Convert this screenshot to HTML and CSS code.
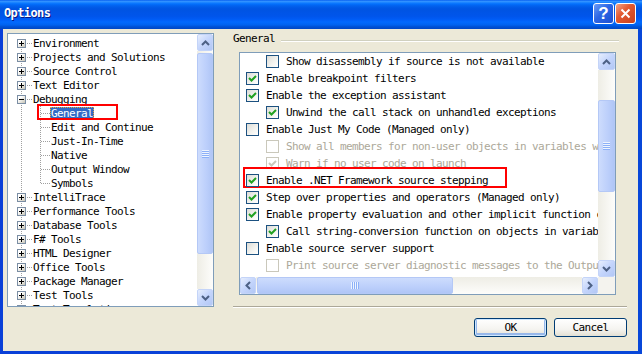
FILE: index.html
```html
<!DOCTYPE html>
<html lang="en">

<head>
    <meta charset="UTF-8">
    <meta name="viewport" content="width=device-width, initial-scale=1.0">
    <title>Options</title>
    <link rel="stylesheet" href="styles.css">
</head>

<body>
    <div class="window">
        <!-- Title bar -->
        <div class="titlebar">
            <span class="title">Options</span>
            <button class="caption-btn help-btn">?</button>
            <button class="caption-btn close-btn">
                <svg width="11" height="11" viewBox="0 0 11 11"><path d="M1.5 1.5 L9.5 9.5 M9.5 1.5 L1.5 9.5" stroke="#fff" stroke-width="2" fill="none"/></svg>
            </button>
        </div>

        <div class="client">
            <!-- Category tree -->
            <div class="tree-box">
                <div class="tree">
                    <div class="node"><span class="expander plus"></span><span class="hline"></span><span class="label">Environment</span></div>
                    <div class="node"><span class="expander plus"></span><span class="hline"></span><span class="label">Projects and Solutions</span></div>
                    <div class="node"><span class="expander plus"></span><span class="hline"></span><span class="label">Source Control</span></div>
                    <div class="node"><span class="expander plus"></span><span class="hline"></span><span class="label">Text Editor</span></div>
                    <div class="node"><span class="expander minus"></span><span class="hline"></span><span class="label">Debugging</span></div>
                    <div class="children">
                        <div class="child marked"><span class="child-line"></span><span class="label selected">General</span></div>
                        <div class="child"><span class="child-line"></span><span class="label">Edit and Continue</span></div>
                        <div class="child"><span class="child-line"></span><span class="label">Just-In-Time</span></div>
                        <div class="child"><span class="child-line"></span><span class="label">Native</span></div>
                        <div class="child"><span class="child-line"></span><span class="label">Output Window</span></div>
                        <div class="child"><span class="child-line"></span><span class="label">Symbols</span></div>
                    </div>
                    <div class="node"><span class="expander plus"></span><span class="hline"></span><span class="label">IntelliTrace</span></div>
                    <div class="node"><span class="expander plus"></span><span class="hline"></span><span class="label">Performance Tools</span></div>
                    <div class="node"><span class="expander plus"></span><span class="hline"></span><span class="label">Database Tools</span></div>
                    <div class="node"><span class="expander plus"></span><span class="hline"></span><span class="label">F# Tools</span></div>
                    <div class="node"><span class="expander plus"></span><span class="hline"></span><span class="label">HTML Designer</span></div>
                    <div class="node"><span class="expander plus"></span><span class="hline"></span><span class="label">Office Tools</span></div>
                    <div class="node"><span class="expander plus"></span><span class="hline"></span><span class="label">Package Manager</span></div>
                    <div class="node"><span class="expander plus"></span><span class="hline"></span><span class="label">Test Tools</span></div>
                    <div class="node"><span class="expander plus"></span><span class="hline"></span><span class="label">Text Templating</span></div>
                </div>
                <div class="vscroll tree-scroll">
                    <div class="sb-btn"><svg width="9" height="6" viewBox="0 0 9 6"><path d="M1 5 L4.5 1.5 L8 5" stroke="#4d6185" stroke-width="2" fill="none"/></svg></div>
                    <div class="v-track"><div class="v-thumb"><span class="grip-v"></span></div></div>
                    <div class="sb-btn"><svg width="9" height="6" viewBox="0 0 9 6"><path d="M1 1 L4.5 4.5 L8 1" stroke="#4d6185" stroke-width="2" fill="none"/></svg></div>
                </div>
            </div>

            <!-- Settings page -->
            <div class="settings">
                <div class="group-head">
                    <span class="group-title">General</span>
                    <span class="group-line"></span>
                </div>

                <div class="list-box">
                    <div class="list">
                        <div class="row sub"><span class="check"></span><span class="text">Show disassembly if source is not available</span></div>
                        <div class="row"><span class="check on"></span><span class="text">Enable breakpoint filters</span></div>
                        <div class="row"><span class="check on"></span><span class="text">Enable the exception assistant</span></div>
                        <div class="row sub"><span class="check on"></span><span class="text">Unwind the call stack on unhandled exceptions</span></div>
                        <div class="row"><span class="check"></span><span class="text">Enable Just My Code (Managed only)</span></div>
                        <div class="row sub disabled"><span class="check"></span><span class="text">Show all members for non-user objects in variables windows</span></div>
                        <div class="row sub disabled"><span class="check on"></span><span class="text">Warn if no user code on launch</span></div>
                        <div class="row marked"><span class="check on"></span><span class="text">Enable .NET Framework source stepping</span></div>
                        <div class="row"><span class="check on"></span><span class="text">Step over properties and operators (Managed only)</span></div>
                        <div class="row"><span class="check on"></span><span class="text">Enable property evaluation and other implicit function calls</span></div>
                        <div class="row sub"><span class="check on"></span><span class="text">Call string-conversion function on objects in variables windows</span></div>
                        <div class="row"><span class="check"></span><span class="text">Enable source server support</span></div>
                        <div class="row sub disabled"><span class="check"></span><span class="text">Print source server diagnostic messages to the Output window</span></div>
                    </div>
                    <div class="vscroll list-vscroll">
                        <div class="sb-btn"><svg width="9" height="6" viewBox="0 0 9 6"><path d="M1 5 L4.5 1.5 L8 5" stroke="#4d6185" stroke-width="2" fill="none"/></svg></div>
                        <div class="v-track"><div class="v-thumb"><span class="grip-v"></span></div></div>
                        <div class="sb-btn"><svg width="9" height="6" viewBox="0 0 9 6"><path d="M1 1 L4.5 4.5 L8 1" stroke="#4d6185" stroke-width="2" fill="none"/></svg></div>
                    </div>
                    <div class="hscroll">
                        <div class="sb-btn"><svg width="6" height="9" viewBox="0 0 6 9"><path d="M5 1 L1.5 4.5 L5 8" stroke="#4d6185" stroke-width="2" fill="none"/></svg></div>
                        <div class="h-track"><div class="h-thumb"><span class="grip-h"></span></div></div>
                        <div class="sb-btn"><svg width="6" height="9" viewBox="0 0 6 9"><path d="M1 1 L4.5 4.5 L1 8" stroke="#4d6185" stroke-width="2" fill="none"/></svg></div>
                    </div>
                    <div class="corner"></div>
                </div>

                <div class="separator"></div>

                <div class="buttons">
                    <button class="btn default">OK</button>
                    <button class="btn">Cancel</button>
                </div>
            </div>
        </div>
    </div>
</body>

</html>
```

FILE: styles.css
```css
/* Base */
body {
    margin: 0;
    padding: 0;
    font-family: 'DejaVu Sans Mono', 'Liberation Mono', monospace;
    font-size: 11px;
    letter-spacing: -0.62px;
    color: #000;
}

/* Window frame */
.window {
    width: 642px;
    height: 354px;
    display: flex;
    flex-direction: column;
    background: linear-gradient(to right, #0a40d8, #0847d9);
    overflow: hidden;
}

.titlebar {
    height: 29px;
    flex: none;
    display: flex;
    align-items: flex-start;
    padding: 3px 6px 0 4px;
    box-sizing: border-box;
    background: linear-gradient(to bottom, #0058ee 0%, #3593ff 4%, #288eff 7%, #127dff 10%, #036ffc 14%, #0262ee 20%, #0057e5 28%, #0054e3 34%, #0055eb 56%, #005bf5 66%, #026afe 76%, #0062ef 86%, #0052d6 92%, #0047c4 100%);
}

.title {
    flex: 1;
    color: #fff;
    font-weight: bold;
    font-size: 12px;
    letter-spacing: -0.6px;
    line-height: 21px;
    text-shadow: 1px 1px 0 #0a1883;
}

.caption-btn {
    width: 21px;
    height: 21px;
    margin-left: 1px;
    padding: 0;
    border: 1px solid #fff;
    border-radius: 3px;
    display: flex;
    align-items: center;
    justify-content: center;
    color: #fff;
}

.help-btn {
    background: linear-gradient(135deg, #6a9cf7 0%, #2d66e4 45%, #1c4fd2 100%);
    font-family: 'Liberation Sans', Arial, sans-serif;
    font-weight: bold;
    font-size: 17px;
    letter-spacing: 0;
}

.close-btn {
    background: linear-gradient(135deg, #f1a58a 0%, #e35a32 40%, #c9401c 100%);
}

/* Dialog body */
.client {
    flex: 1;
    display: flex;
    gap: 19px;
    margin: 0 4px 3px 3px;
    padding: 4px 11px 0 4px;
    background-color: #ece9d8;
}

/* Tree */
.tree-box {
    width: 207px;
    height: 274px;
    box-sizing: border-box;
    border: 1px solid #7f9db9;
    background: #fff;
    display: flex;
}

.tree {
    flex: 1;
    overflow: hidden;
    padding-top: 2px;
    background: repeating-linear-gradient(to bottom, #a0a0a0 0 1px, transparent 1px 2px) 13px 9px / 1px 100% no-repeat;
}

.node,
.child {
    height: 14px;
    display: flex;
    align-items: center;
    white-space: nowrap;
}

.node {
    padding-left: 9px;
}

.expander {
    width: 9px;
    height: 9px;
    flex: none;
    box-sizing: border-box;
    border: 1px solid #7b8ea4;
}

.plus {
    background: linear-gradient(#000, #000) center / 5px 1px no-repeat,
        linear-gradient(#000, #000) center / 1px 5px no-repeat,
        linear-gradient(135deg, #fff 30%, #c6c3b4);
}

.minus {
    background: linear-gradient(#000, #000) center / 5px 1px no-repeat,
        linear-gradient(135deg, #fff 30%, #c6c3b4);
}

.hline {
    width: 6px;
    height: 1px;
    flex: none;
    background: repeating-linear-gradient(to right, transparent 0 1px, #a0a0a0 1px 2px);
}

.label {
    padding: 0 1px;
    line-height: 13px;
}

.children {
    background: repeating-linear-gradient(to bottom, #a0a0a0 0 1px, transparent 1px 2px) 32px 0 / 1px calc(100% - 7px) no-repeat;
}

.child {
    padding-left: 33px;
}

.child-line {
    width: 9px;
    height: 1px;
    flex: none;
    background: repeating-linear-gradient(to right, #a0a0a0 0 1px, transparent 1px 2px);
}

.selected {
    background-color: #316ac5;
    color: #fff;
    outline: 1px dotted #e8a23a;
    outline-offset: -1px;
}

.child.marked {
    position: relative;
}

.child.marked::after {
    content: '';
    position: absolute;
    left: 29px;
    top: -2px;
    width: 81px;
    height: 16px;
    box-sizing: border-box;
    border: 2px solid #f00;
}

/* Scrollbars */
.vscroll {
    width: 16px;
    flex: none;
    display: flex;
    flex-direction: column;
}

.sb-btn {
    width: 16px;
    height: 17px;
    flex: none;
    box-sizing: border-box;
    border: 1px solid #c4d4f8;
    border-radius: 2px;
    background: linear-gradient(135deg, #e6eefd 0%, #c4d5fc 50%, #b2c7f5 100%);
    display: flex;
    align-items: center;
    justify-content: center;
}

.v-track {
    flex: 1;
    background: linear-gradient(to right, #eeede5, #fdfdfb);
}

.v-thumb {
    margin: 2px 0 0 0;
    height: 201px;
    box-sizing: border-box;
    border: 1px solid #b4c8f6;
    border-radius: 2px;
    background: linear-gradient(to right, #cddcfd, #bccffb 60%, #b0c6f6);
    display: flex;
    align-items: center;
    justify-content: center;
}

.grip-v {
    width: 7px;
    height: 8px;
    background: repeating-linear-gradient(to bottom, #eef4fe 0 1px, #8cb0f8 1px 2px);
}

.list-vscroll .v-thumb {
    margin-top: 30px;
    height: 92px;
}

.hscroll {
    height: 17px;
    display: flex;
}

.h-track {
    flex: 1;
    background: linear-gradient(to bottom, #eeede5, #fdfdfb);
}

.h-thumb {
    margin-left: 1px;
    width: 196px;
    height: 100%;
    box-sizing: border-box;
    border: 1px solid #b4c8f6;
    border-radius: 2px;
    background: linear-gradient(to bottom, #cddcfd, #bccffb 60%, #b0c6f6);
    display: flex;
    align-items: center;
    justify-content: center;
}

.grip-h {
    width: 8px;
    height: 7px;
    background: repeating-linear-gradient(to right, #eef4fe 0 1px, #8cb0f8 1px 2px);
}

/* Settings page */
.settings {
    flex: 1;
    display: flex;
    flex-direction: column;
}

.group-head {
    height: 19px;
    display: flex;
    align-items: flex-start;
}

.group-title {
    line-height: 11px;
}

.group-line {
    flex: 1;
    margin: 7px 8px 0 6px;
    border-top: 1px solid #d0d0bf;
    border-bottom: 1px solid #fff;
}

.list-box {
    margin: 0 11px 0 6px;
    height: 243px;
    box-sizing: border-box;
    border: 1px solid #7f9db9;
    background: #fff;
    display: grid;
    grid-template-columns: 1fr 17px;
    grid-template-rows: 1fr 17px;
}

.list {
    overflow: hidden;
}

.list-vscroll {
    width: 17px;
}

.list-vscroll .sb-btn {
    width: 17px;
}

.corner {
    background: #f4f3ee;
}

.row {
    height: 17px;
    display: flex;
    align-items: center;
    padding-left: 6px;
    white-space: nowrap;
}

.row.sub {
    padding-left: 26px;
}

.check {
    width: 13px;
    height: 13px;
    flex: none;
    margin-right: 7px;
    box-sizing: border-box;
    border: 1px solid #1c5180;
    background: linear-gradient(135deg, #dcdcd7 0%, #f4f4f0 60%, #fff 100%);
}

.check.on {
    background: url("data:image/svg+xml,%3Csvg xmlns='http://www.w3.org/2000/svg' width='11' height='11'%3E%3Cpath d='M2 5 L4.5 7.5 L9 3' stroke='%2321a121' stroke-width='2' fill='none'/%3E%3C/svg%3E") center no-repeat,
        linear-gradient(135deg, #dcdcd7 0%, #f4f4f0 60%, #fff 100%);
}

.disabled .text {
    color: #aca899;
}

.disabled .check {
    border-color: #cac8bb;
    background: #fff;
}

.disabled .check.on {
    background: url("data:image/svg+xml,%3Csvg xmlns='http://www.w3.org/2000/svg' width='11' height='11'%3E%3Cpath d='M2 5 L4.5 7.5 L9 3' stroke='%23cac8bb' stroke-width='2' fill='none'/%3E%3C/svg%3E") center no-repeat, #fff;
}

.row.marked {
    position: relative;
}

.row.marked::after {
    content: '';
    position: absolute;
    left: 3px;
    top: -5px;
    width: 264px;
    height: 21px;
    box-sizing: border-box;
    border: 2px solid #f00;
    background: #fff;
}

.row.marked .check,
.row.marked .text {
    position: relative;
    z-index: 1;
}

.separator {
    margin-top: 11px;
    border-top: 1px solid #aca899;
    border-bottom: 1px solid #fff;
}

/* Buttons */
.buttons {
    margin-top: 10px;
    display: flex;
    justify-content: flex-end;
    gap: 7px;
}

.btn {
    width: 73px;
    height: 19px;
    padding: 0;
    border: 1px solid #003c74;
    border-radius: 3px;
    background: linear-gradient(to bottom, #fff 0%, #f5f4f0 60%, #e3e0d3 100%);
    font-family: inherit;
    font-size: 11px;
    letter-spacing: -0.62px;
    color: #000;
}

.btn.default {
    box-shadow: inset 0 0 0 1px #cee7ff, inset 0 -1px 0 2px #98b8ea;
}
```
